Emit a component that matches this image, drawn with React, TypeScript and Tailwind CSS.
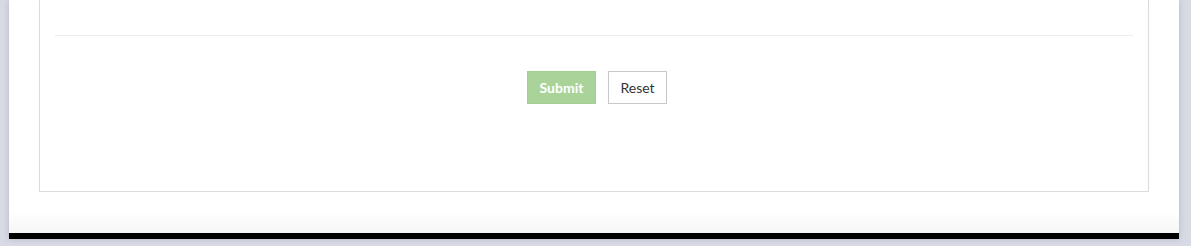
import React from 'react'

export default function App() {
  return (
    <div className="w-[1191px] h-[246px] overflow-hidden bg-[#d8dbe4] pl-[9px] pr-[12px] font-['Lato','Liberation_Sans',sans-serif]">
      <div className="h-[239px] bg-white flex flex-col border-b-[6px] border-black shadow-[0_0_6px_rgba(150,156,178,0.6)]">
        <div className="px-[30px]">
          <div className="h-[192px] border-x border-b border-[#dcdcdc] shadow-[0_1px_1px_rgba(0,0,0,0.05)] px-[15px] pt-[35px] flex flex-col">
            <div className="h-px bg-[#ececec]" />
            <div className="flex justify-center gap-[12px] mt-[35px] pl-[6px]">
              <button className="h-[33px] w-[69px] bg-[#aad39a] border border-[#a4cf93] text-white text-[14px] font-bold">
                Submit
              </button>
              <button className="h-[33px] w-[59px] bg-white border border-[#c8c8c8] text-[#333] text-[14px]">
                Reset
              </button>
            </div>
          </div>
        </div>
        <div className="flex-1 bg-gradient-to-b from-white via-white to-[#f5f5f5]" />
      </div>
    </div>
  )
}
